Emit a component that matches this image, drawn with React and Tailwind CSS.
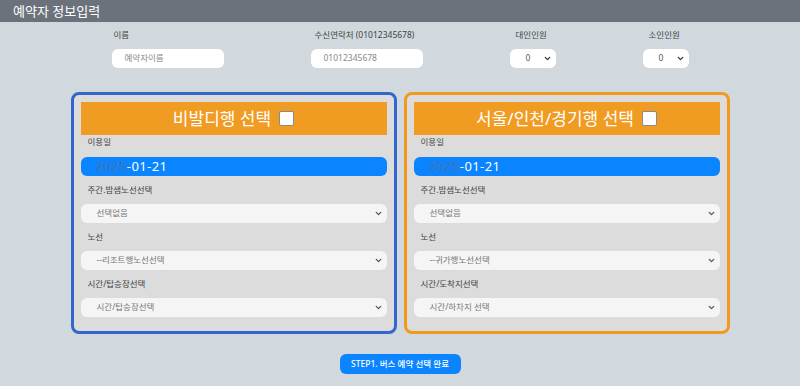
import React from 'react';
import { ChevronDown } from 'lucide-react';

const FONT = "font-['Noto_Sans','Noto_Sans_CJK_KR',sans-serif]";

const SelectBox = ({ text }) => (
  <div className="h-[19px] rounded-[6px] bg-[#f5f5f5] flex items-center justify-between pl-[16px] pr-[4px]">
    <span className="text-[8.5px] text-[#777]">{text}</span>
    <ChevronDown size={9} strokeWidth={3.5} className="text-[#555]" />
  </div>
);

const Label = ({ children, first }) => (
  <div className={`text-[8.5px] leading-[12px] text-[#444] pl-[7px] ${first ? 'mt-[1px] mb-[9px]' : 'mt-[8px] mb-[8px]'}`}>
    {children}
  </div>
);

const Panel = ({ title, border, fields }) => (
  <div className={`w-[326px] h-[242px] border-[3px] ${border} rounded-[8px] p-[7px] bg-[#dcdcdc]`}>
    <div className="h-[33px] bg-[#f09c22] flex items-center justify-center gap-[8px]">
      <span className="text-white text-[17px] leading-none">{title}</span>
      <span className="w-[15px] h-[15px] bg-white border border-[#8a8a8a] rounded-[2px]" />
    </div>
    <Label first>이용일</Label>
    <div className="h-[19px] rounded-[6px] bg-[#0a84ff] flex items-center pl-[15px] text-[13px] leading-none tracking-[0.4px]">
      <span className="text-[#4a73a3]">2025</span>
      <span className="text-white">-01-21</span>
    </div>
    {fields.map((f, i) => (
      <div key={i}>
        <Label>{f.label}</Label>
        <SelectBox text={f.value} />
      </div>
    ))}
  </div>
);

export default function App() {
  return (
    <div className={`w-full h-[386px] bg-[#d1d9de] ${FONT}`}>
      <header className="h-[22px] bg-[#6c727c] px-[13px] text-white text-[13px] leading-[22px]">
        예약자 정보입력
      </header>

      {/* 예약자 정보 */}
      <div className="flex justify-center gap-[87px] pt-[8px]">
        <div className="w-[112px]">
          <div className="text-[8.5px] leading-[10px] text-[#444] pl-[2px] mb-[9px]">이름</div>
          <div className="h-[19px] rounded-[6px] bg-white flex items-center pl-[13px] text-[8.5px] text-[#888]">예약자이름</div>
        </div>
        <div className="w-[112px]">
          <div className="text-[8.5px] leading-[10px] text-[#444] pl-[4px] mb-[9px] whitespace-nowrap">수신연락처 (01012345678)</div>
          <div className="h-[19px] rounded-[6px] bg-white flex items-center pl-[13px] text-[8.5px] text-[#888]">01012345678</div>
        </div>
        <div className="w-[46px]">
          <div className="text-[8.5px] leading-[10px] text-[#444] pl-[6px] mb-[9px] whitespace-nowrap">대인인원</div>
          <div className="h-[19px] rounded-[6px] bg-white flex items-center justify-between pl-[16px] pr-[4px] text-[8.5px] text-[#555]">
            0 <ChevronDown size={9} strokeWidth={3.5} className="text-[#333]" />
          </div>
        </div>
        <div className="w-[46px]">
          <div className="text-[8.5px] leading-[10px] text-[#444] pl-[6px] mb-[9px] whitespace-nowrap">소인인원</div>
          <div className="h-[19px] rounded-[6px] bg-white flex items-center justify-between pl-[16px] pr-[4px] text-[8.5px] text-[#555]">
            0 <ChevronDown size={9} strokeWidth={3.5} className="text-[#333]" />
          </div>
        </div>
      </div>

      {/* 노선 선택 */}
      <div className="flex justify-center gap-[7px] mt-[24px]">
        <Panel
          title="비발디행 선택"
          border="border-[#3366cc]"
          fields={[
            { label: '주간.밤샘노선선택', value: '선택없음' },
            { label: '노선', value: '--리조트행노선선택' },
            { label: '시간/탑승장선택', value: '시간/탑승장선택' },
          ]}
        />
        <Panel
          title="서울/인천/경기행 선택"
          border="border-[#f39a1e]"
          fields={[
            { label: '주간.밤샘노선선택', value: '선택없음' },
            { label: '노선', value: '--귀가행노선선택' },
            { label: '시간/도착지선택', value: '시간/하차지 선택' },
          ]}
        />
      </div>

      <div className="flex justify-center mt-[20px]">
        <button className="w-[121px] h-[20px] rounded-[6px] bg-[#0a84ff] text-white text-[8.5px] font-medium">
          STEP1. 버스 예약 선택 완료
        </button>
      </div>
    </div>
  );
}
